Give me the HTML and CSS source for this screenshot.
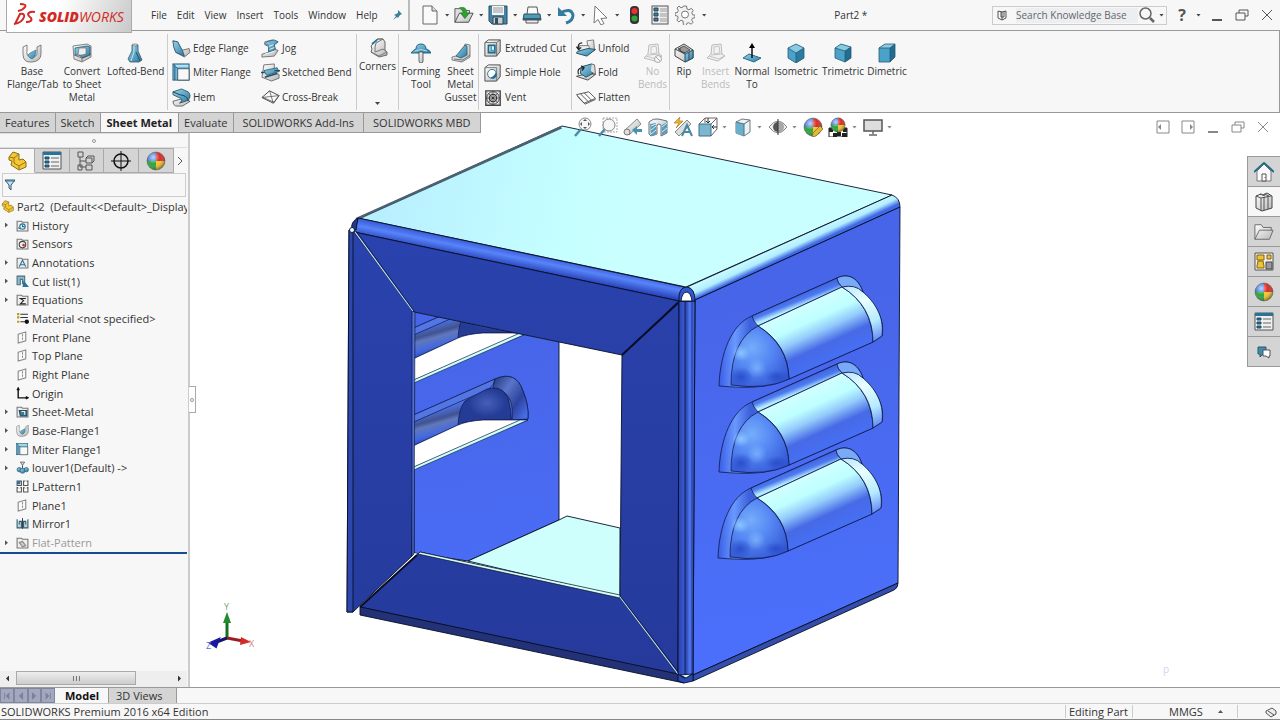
FILE: index.html
```html
<!DOCTYPE html>
<html lang="en">
<head>
<meta charset="utf-8">
<meta name="viewport" content="width=device-width, initial-scale=1">
<title>SOLIDWORKS - Part2</title>
<link rel="stylesheet" href="styles.css">
</head>
<body>
<svg class="defs" aria-hidden="true">
  <defs>
    <linearGradient id="blue" x1="0" y1="0" x2="1" y2="1"><stop offset="0" stop-color="#9bd6ea"/><stop offset="1" stop-color="#2878a2"/></linearGradient>
    <linearGradient id="steel" x1="0" y1="0" x2="1" y2="1"><stop offset="0" stop-color="#fff"/><stop offset="1" stop-color="#b8b8b8"/></linearGradient>
    <radialGradient id="shine" cx=".35" cy=".3" r=".75"><stop offset="0" stop-color="#fff" stop-opacity=".7"/><stop offset=".5" stop-color="#fff" stop-opacity="0"/><stop offset="1" stop-color="#000" stop-opacity=".5"/></radialGradient>
    <g id="ball"><path d="M10 1A9 9 0 0 0 1 10H10Z" fill="#3972d8"/><path d="M10 1A9 9 0 0 1 19 10H10Z" fill="#d82b24"/><path d="M1 10A9 9 0 0 0 10 19V10Z" fill="#2da33a"/><path d="M19 10A9 9 0 0 1 10 19V10Z" fill="#f0c52b"/><circle cx="10" cy="10" r="9" fill="url(#shine)" stroke="#555" stroke-width=".5"/></g>
  </defs>
  <symbol id="base" viewBox="0 0 20 20"><path d="M1 4l4-2v8q0 4 5 4t5-4V4l4-2v9q0 7-9 8T1 11Z" fill="url(#steel)" stroke="#666" stroke-width=".8"/><path d="M5 9l5 4 5-4-4-3Z" fill="#fff"/><path d="M8 10l6-3q0 7-4 9-3-1-4-4Z" fill="url(#blue)" stroke="#246c8c" stroke-width=".6"/></symbol>
  <symbol id="convert" viewBox="0 0 20 20"><path d="M1 3l14-2 4 2v11l-9 5-8-3Z" fill="url(#steel)" stroke="#666" stroke-width=".8"/><path d="M3 5l12-2 3 1v8l-7 3-4-3H3Z" fill="url(#blue)" stroke="#285c76" stroke-width=".8"/><path d="M7 5h7v6l-4 1H6Z" fill="#eee" stroke="#666" stroke-width=".6"/><path d="M2 12l8 3v3M10 15l9-4" fill="none" stroke="#555" stroke-width=".8"/></symbol>
  <symbol id="loft" viewBox="0 0 20 20"><path d="M7 2h6v6l4 9-3 2H5l-2-3 4-8Z" fill="url(#blue)" stroke="#3b5263" stroke-width=".8"/><ellipse cx="10" cy="2" rx="3" ry="1" fill="#e8f6fb" stroke="#444" stroke-width=".6"/><path d="M9 3v6l-3 9" fill="none" stroke="#b9e2ef"/><path d="M11 9l4 9" stroke="#244e6b"/></symbol>
  <symbol id="edge" viewBox="0 0 20 20"><path d="M1 2l5 1 4 9 8-2 1 4-6 5-9-5Z" fill="url(#steel)" stroke="#555" stroke-width=".8"/><path d="M1 2l5 1 5 9 2 6-9-4Q1 9 1 2Z" fill="url(#blue)" stroke="#244e64" stroke-width=".8"/></symbol>
  <symbol id="miter" viewBox="0 0 20 20"><rect x="1" y="1" width="17" height="17" fill="#71b9da" stroke="#345e71"/><path d="M6 6h12v12H6Z" fill="#f8f8f8" stroke="#465865"/><path d="M1 1l5 5M3 3v15" stroke="#285d7c"/><path d="M4 3h13" stroke="#b8e4f5" stroke-width="2"/></symbol>
  <symbol id="hem" viewBox="0 0 20 20"><path d="M1 14l11-3 7 3-8 5H4Q1 18 1 14Z" fill="url(#steel)" stroke="#444" stroke-width=".8"/><path d="M1 4l9-3 7 3q4 4 0 9l-9 3q5-5-1-6L1 7Z" fill="url(#blue)" stroke="#293f4a" stroke-width=".8"/><path d="M1 4l7 3q8 1 9 6" fill="none" stroke="#14445c"/></symbol>
  <symbol id="jog" viewBox="0 0 20 20"><path d="M4 3l8-2 6 2-4 3 1 5 3 1-4 6-13 1v-3l7-2V8L4 6Z" fill="url(#steel)" stroke="#555" stroke-width=".8"/><path d="M6 3l8-2 4 2-4 3 1 5-7 3V7L4 5Z" fill="url(#blue)" stroke="#305d75" stroke-width=".8"/><path d="M8 8l5-2M9 11l5-2M4 16l10-3" stroke="#e8f6fd"/></symbol>
  <symbol id="sketch" viewBox="0 0 20 20"><path d="M3 2l11-1v9l5 2v4l-8 3-10-4Z" fill="url(#steel)" stroke="#555" stroke-width=".8"/><path d="M3 8l14-3 2 4-13 4Z" fill="url(#blue)" stroke="#244e64" stroke-width=".8"/><path d="M0 10h4M14 8h6M4 15l13-4" stroke="#244e64" stroke-width="1.500"/></symbol>
  <symbol id="cross" viewBox="0 0 20 20"><path d="M1 10l8-7 10 5-6 8Z" fill="#fafafa" stroke="#444"/><path d="M1 10h1l12 5 5-7M1 10l18-2M9 3l4 13" fill="none" stroke="#555" stroke-width=".8"/></symbol>
  <symbol id="corner" viewBox="0 0 20 20"><path d="M3 8l6-7h6l2 3v8l2 2v3l-8 2-8-5 1-3Z" fill="url(#steel)" stroke="#666"/><path d="M3 8l7-7h5L8 5l-1 4v5l8-3 4 3-8 4-8-4" fill="none" stroke="#777"/><path d="M4 6l5-4" stroke="#237d9d" stroke-width="2"/></symbol>
  <symbol id="form" viewBox="0 0 20 20"><path d="M0 10Q2 7 5 6q0-5 5-5t5 5q4 1 5 4H0Z" fill="url(#blue)" stroke="#286482"/><path d="M4 8q6-3 12 0" fill="none" stroke="#b0dced"/><path d="M8 9h4v9q0 2-2 2t-2-2Z" fill="url(#steel)" stroke="#444" stroke-width=".8"/></symbol>
  <symbol id="gusset" viewBox="0 0 20 20"><path d="M14 1l5 1v12l-8 5-10-2v-3l12-3Z" fill="url(#steel)" stroke="#666" stroke-width=".8"/><path d="M14 2l2 1v9l-6 3-5-2Z" fill="url(#blue)" stroke="#28596e" stroke-width=".8"/><path d="M3 16l9 1 7-5" fill="none" stroke="#777"/></symbol>
  <symbol id="cut" viewBox="0 0 20 20"><path d="M1 4l4-3h13v13l-4 5H1Z" fill="url(#steel)" stroke="#444"/><path d="M1 4h13v15M14 4l4-3" fill="none" stroke="#666"/><path d="M5 7h7v8H5Z" fill="#fff" stroke="#236988" stroke-width="2"/><path d="M8 8v5h4" fill="none" stroke="#469dc1" stroke-width="2"/></symbol>
  <symbol id="hole" viewBox="0 0 20 20"><path d="M1 4l4-3h13v13l-4 5H1Z" fill="url(#steel)" stroke="#444"/><path d="M1 4h13v15" fill="none" stroke="#777"/><circle cx="9" cy="11" r="5" fill="#fff" stroke="#246d93"/><path d="M13 8q0 5-6 7 5 3 7-2Z" fill="#1d6d98"/></symbol>
  <symbol id="vent" viewBox="0 0 20 20"><path d="M2 2h16v16H2Z" fill="#eee" stroke="#444" stroke-width="1.500"/><circle cx="10" cy="10" r="7" fill="#ddd" stroke="#333"/><circle cx="10" cy="10" r="4" fill="none" stroke="#333" stroke-width="1.500"/><path d="M4 4l12 12M16 4L4 16M10 2v16M2 10h16" stroke="#444" stroke-width=".7"/><circle cx="10" cy="10" r="1.500" fill="#333"/></symbol>
  <symbol id="unfold" viewBox="0 0 22 20"><path d="M12 2l7-1 1 11-6 2Z" fill="url(#steel)" stroke="#777"/><path d="M4 7h10l1 5-11 2Z" fill="#eee" stroke="#777"/><path d="M2 13l11-3 8 1-9 7-11-3Z" fill="url(#blue)" stroke="#234d60"/><path d="M7 4Q2 4 3 10M1 8l2 3 3-2" fill="none" stroke="#222" stroke-width="1.300"/></symbol>
  <symbol id="fold" viewBox="0 0 22 20"><path d="M1 14l12-3 8 1-8 6Z" fill="url(#steel)" stroke="#444"/><path d="M6 4l11-3 3 9-9 5-6-4Z" fill="url(#blue)" stroke="#234d60"/><path d="M17 1l3 1 1 10-5-3" fill="#ddd" stroke="#666"/><path d="M3 12Q1 5 8 5M6 3l3 2-2 3" fill="none" stroke="#222" stroke-width="1.300"/></symbol>
  <symbol id="flatten" viewBox="0 0 22 20"><path d="M1 7l13-3 7 7-12 5Z" fill="#fafafa" stroke="#555"/><path d="M5 6l8 8M9 5l8 8M2 9l8 8 11-5" fill="none" stroke="#555"/></symbol>
  <symbol id="bends" viewBox="0 0 20 20"><path d="M6 2l9-1 1 10 3 2-7 5-11-3 4-4Z" fill="#f2f2f2" stroke="#bbb"/><path d="M8 4l5-1 1 7-6 1ZM3 13l10 3 5-3M5 12l11-1" fill="none" stroke="#c4c4c4"/></symbol>
  <symbol id="nobends" viewBox="0 0 20 20"><use href="#bends" width="20" height="20"/><circle cx="15" cy="16" r="3.500" fill="#f7f7f7" stroke="#aaa"/><path d="M13 14l4 4" stroke="#aaa"/></symbol>
  <symbol id="rip" viewBox="0 0 20 20"><path d="M1 6l9-5 9 6v8l-8 4-10-6Z" fill="url(#steel)" stroke="#444"/><path d="M4 6l6-3 6 4-6 3Z" fill="#999" stroke="#555"/><path d="M11 11l8-4v8l-8 4Z" fill="url(#blue)" stroke="#1e536d"/><path d="M1 6l10 5M6 5v3l5 2M15 9v8" fill="none" stroke="#444"/></symbol>
  <symbol id="normal" viewBox="0 0 20 20"><path d="M1 15l6-4 12 4-7 4Z" fill="url(#blue)" stroke="#2c6c87"/><path d="M10 15V3" stroke="#111" stroke-width="1.500"/><path d="M10 0l3 5H7Z"/></symbol>
  <symbol id="iso" viewBox="0 0 20 20"><path d="M2 5l8-4 8 4v10l-8 5-8-5Z" fill="#4ba2c8"/><path d="M2 5l8-4 8 4-8 5Z" fill="#8acbe4"/><path d="M10 10l8-5v10l-8 5Z" fill="#2d7aa2"/><path d="M2 5l8-4 8 4v10l-8 5-8-5V5l8 5 8-5M10 10v10" fill="none" stroke="#285a72" stroke-width=".8"/></symbol>
  <symbol id="tri" viewBox="0 0 20 20"><path d="M2 5l6-4 10 3v11l-6 4-10-4Z" fill="#4ba2c8"/><path d="M2 5l6-4 10 3-6 4Z" fill="#8acbe4"/><path d="M12 8l6-4v11l-6 4Z" fill="#226c93"/><path d="M2 5l6-4 10 3v11l-6 4-10-4V5l10 3 6-4M12 8v11" fill="none" stroke="#285a72" stroke-width=".8"/></symbol>
  <symbol id="di" viewBox="0 0 20 20"><path d="M2 5l6-4h10v13l-5 5H2Z" fill="#4ba2c8"/><path d="M2 5l6-4h10l-5 4Z" fill="#8acbe4"/><path d="M13 5l5-4v13l-5 5Z" fill="#226c93"/><path d="M2 5l6-4h10v13l-5 5H2V5h11l5-4M13 5v14" fill="none" stroke="#285a72" stroke-width=".8"/></symbol>
  <symbol id="pin" viewBox="0 0 12 12"><path d="M7 1l4 4-2 1-2 3-1-1-4 3 3-4-2-1 4-2Z" fill="#3b7f9b"/></symbol>
  <symbol id="new" viewBox="0 0 20 20"><path d="M3 1h9l5 5v13H3Z" fill="#fafafa" stroke="#666"/><path d="M12 1v5h5" fill="#ddd" stroke="#666"/></symbol>
  <symbol id="open" viewBox="0 0 22 20"><path d="M1 18V3h6l2 2h8v4" fill="#ddd" stroke="#555"/><path d="M1 18L6 8h15l-5 10Z" fill="url(#steel)" stroke="#444"/><path d="M6 2q8-2 8 6h3l-5 6-5-6h3q0-4-4-6Z" fill="#2ba32e" stroke="#247527" stroke-width=".6"/></symbol>
  <symbol id="save" viewBox="0 0 20 20"><path d="M1 1h18v18H4l-3-3Z" fill="#4484a4" stroke="#274d5f"/><path d="M4 1h12v9H4Z" fill="#f5f5f5"/><path d="M5 3h10M5 5h10M5 7h10" stroke="#999"/><path d="M5 12h10v7H5Z" fill="#ccc" stroke="#28485a"/><path d="M7 13h3v6H7Z" fill="#334f5c"/></symbol>
  <symbol id="print" viewBox="0 0 20 20"><path d="M5 9l1-7h9l1 7" fill="#fafafa" stroke="#555"/><path d="M2 9h16l1 6H1Z" fill="#4e99b8" stroke="#32505e"/><path d="M4 15h12v3H4Z" fill="#eee" stroke="#555"/><path d="M1 14h18" stroke="#345a6b" stroke-width="2"/></symbol>
  <symbol id="undo" viewBox="0 0 20 20"><path d="M4 8q11-6 13 2 0 6-7 8" fill="none" stroke="#347c9e" stroke-width="3"/><path d="M2 2v9h9Z" fill="#347c9e"/></symbol>
  <symbol id="cursor" viewBox="0 0 20 20"><path d="M5 1l12 12-6 .5 3 5-3 1.500-3-5.500L4 18Z" fill="#fff" stroke="#777"/></symbol>
  <symbol id="light" viewBox="0 0 20 20"><rect x="5" y="1" width="9" height="18" rx="4" fill="#333"/><circle cx="9.500" cy="6" r="3" fill="#ee302e"/><circle cx="9.500" cy="13.500" r="3" fill="#35a13a"/></symbol>
  <symbol id="options" viewBox="0 0 20 20"><rect x="2" y="1" width="16" height="18" fill="#eee" stroke="#555"/><path d="M4 3h4v3H4zM4 8h4v3H4zM4 13h4v3H4z" fill="#3b7d9b" stroke="#26495a"/><path d="M10 4h7M10 6h7M10 9h7M10 11h7M10 14h7M10 16h7" stroke="#999"/></symbol>
  <symbol id="gear" viewBox="0 0 20 20"><path d="M8.500 1h3l.5 3 2 .8 2.300-1.500 2 2-1.500 2.500.8 2 2.400.4v2.500l-2.500.5-.8 2 1.500 2-2 2-2.500-1.500-2 .8-.5 2H8.500L8 16l-2-.8L3.800 17l-2-2 1.400-2-.8-2L0 10.500V8l2.500-.5.8-2L2 3l2-2 2 1.800L8 2Z" fill="#f2f2f2" stroke="#777"/><circle cx="10" cy="9.500" r="3.500" fill="#fff" stroke="#777"/></symbol>
  <symbol id="min" viewBox="0 0 14 14"><path d="M2 12h10" stroke="currentColor" stroke-width="2"/></symbol>
  <symbol id="restore" viewBox="0 0 14 14"><path d="M4 5V2h9v6h-3M1 5h9v7H1Z" fill="none" stroke="currentColor"/></symbol>
  <symbol id="close" viewBox="0 0 14 14"><path d="M2 2l10 10M12 2L2 12" stroke="currentColor"/></symbol>
  <symbol id="dockl" viewBox="0 0 14 14"><path d="M1 1h12v12H1Z" fill="#fff" stroke="currentColor"/><path d="M5 4L2 7l3 3Z" fill="currentColor"/></symbol>
  <symbol id="dockr" viewBox="0 0 14 14"><path d="M1 1h12v12H1Z" fill="#fff" stroke="currentColor"/><path d="M9 4l3 3-3 3Z" fill="currentColor"/></symbol>
  <symbol id="book" viewBox="0 0 10 12"><path d="M1 2l4 1 4-1v7l-4 2-4-2ZM5 3v8M4 2v6h3V2" fill="none" stroke="#555"/></symbol>
  <symbol id="search" viewBox="0 0 18 18"><circle cx="7.500" cy="7.500" r="5.500" fill="none" stroke="#666" stroke-width="1.500"/><path d="M12 12l4 4" stroke="#666" stroke-width="2.500"/></symbol>
  <symbol id="part" viewBox="0 0 20 20"><path d="M2 6l4-5 6 2v6l4-1 3 3v5l-7 3-8-5 1-4-3-1Z" fill="#f2c834" stroke="#8d6b12"/><path d="M2 6l5 1 5-4M7 7v5l5 3 7-4M12 15v4" fill="none" stroke="#9a7617"/></symbol>
  <symbol id="props" viewBox="0 0 20 20"><path d="M1 1h18v17H1Z" fill="#f0f0f0" stroke="#555"/><path d="M1 1h18v3H1Z" fill="#287498"/><path d="M3 6h4v2H3zM3 10h4v2H3zM3 14h4v2H3z" fill="#287498" stroke="#194e67"/><path d="M9 7h8M9 11h8M9 15h8" stroke="#666"/></symbol>
  <symbol id="config" viewBox="0 0 20 20"><path d="M2 1h5v5H2ZM4 6v10h6M4 10h6M2 14h4v5H2ZM10 7h6v5h-6ZM10 14h6v5h-6ZM10 7l2-2h6v5l-2 2" fill="none" stroke="#555"/></symbol>
  <symbol id="target" viewBox="0 0 20 20"><circle cx="10" cy="10" r="7" fill="none" stroke="#111" stroke-width="1.500"/><path d="M10 0v20M0 10h20" stroke="#111"/></symbol>
  <symbol id="appearance" viewBox="0 0 20 20"><use href="#ball"/></symbol>
  <symbol id="filter" viewBox="0 0 12 12"><path d="M1 1h10L7 6v5L5 9V6Z" fill="#c9e2ee" stroke="#315569"/><path d="M1 2h10" stroke="#287498"/></symbol>
  <symbol id="folder" viewBox="0 0 12 12"><path d="M1 11V2h4l1 1h5v8Z" fill="#eee" stroke="#777"/></symbol>
  <symbol id="history" viewBox="0 0 12 12"><use href="#folder" width="12" height="12"/><circle cx="6" cy="7" r="2.500" fill="none" stroke="#287498"/><path d="M6 5v2h2M2 8l2 1" fill="none" stroke="#287498"/></symbol>
  <symbol id="sensor" viewBox="0 0 12 12"><use href="#folder" width="12" height="12"/><circle cx="6" cy="7" r="3" fill="none" stroke="#444"/><path d="M6 7l2 1" stroke="#d42f2f" stroke-width="2"/></symbol>
  <symbol id="annot" viewBox="0 0 12 12"><use href="#folder" width="12" height="12"/><path d="M3 10l3-6 3 6M4 8h4" fill="none" stroke="#287498"/></symbol>
  <symbol id="cutlist" viewBox="0 0 12 12"><path d="M1 1h7v7H6V4H4v5H1Z" fill="#93b8c8" stroke="#477186"/><path d="M7 5l5 6H6Z" fill="#287498"/></symbol>
  <symbol id="equation" viewBox="0 0 12 12"><use href="#folder" width="12" height="12"/><path d="M9 5H4l3 2-3 3h5" fill="none" stroke="#222"/></symbol>
  <symbol id="material" viewBox="0 0 12 12"><path d="M1 2h2M1 5h2M1 9h2" stroke="#b39920" stroke-width="2"/><path d="M4 2h7M4 5h7M4 9h5" stroke="#333"/><circle cx="10" cy="9" r="2" fill="#111"/></symbol>
  <symbol id="plane" viewBox="0 0 12 12"><path d="M2 3l7-2v8l-7 2Z" fill="#fafafa" stroke="#888"/><path d="M6 3v6" stroke="#888" stroke-dasharray="2 1"/></symbol>
  <symbol id="origin" viewBox="0 0 12 12"><path d="M2 1v9h9M1 3l1-2 1 2M9 9l2 1-2 1" fill="none" stroke="#111" stroke-width="1.300"/></symbol>
  <symbol id="metal" viewBox="0 0 12 12"><use href="#folder" width="12" height="12"/><path d="M3 5h7v5H4Z" fill="#397a96" stroke="#234d60"/><path d="M5 6h3v3" fill="none" stroke="#eee"/></symbol>
  <symbol id="louver" viewBox="0 0 12 12"><path d="M4 1h4L6 4Z" fill="#ddd" stroke="#555" stroke-width=".7"/><path d="M6 4v3" stroke="#285a72"/><circle cx="3" cy="8" r="2" fill="url(#blue)" stroke="#285a72" stroke-width=".7"/><circle cx="9.500" cy="8" r="2" fill="url(#blue)" stroke="#285a72" stroke-width=".7"/><circle cx="6" cy="9" r="2.300" fill="url(#blue)" stroke="#285a72" stroke-width=".7"/></symbol>
  <symbol id="pattern" viewBox="0 0 12 12"><path d="M1 1h4v4H1zM7 1h4v4H7zM1 7h4v4H1zM7 7h4v4H7z" fill="#fff" stroke="#555"/><path d="M1 1h3v3H1z" fill="#287498"/><path d="M8 1h2M2 7h2M8 7h2" stroke="#fff"/></symbol>
  <symbol id="mirror" viewBox="0 0 12 12"><path d="M1 2v8h4V4H3v3M11 2v8H7V4h2v3" fill="#b9d4e0" stroke="#365b6d"/><path d="M6 1v10" stroke="#222" stroke-width=".8"/></symbol>
  <symbol id="flatpat" viewBox="0 0 12 12"><use href="#folder" width="12" height="12"/><path d="M3 6l3-1 3 4-3 1Z" fill="#ccc" stroke="#888"/></symbol>
  <symbol id="fit" viewBox="0 0 20 20"><path d="M2 19l6-7" stroke="#4b8ba8" stroke-width="2.500"/><circle cx="12" cy="7" r="6" fill="#f5f5f5" fill-opacity=".8" stroke="#888"/><path d="M12 2l2 2h-4zM12 12l2-2h-4zM7 7l2-2v4zM17 7l-2-2v4z" fill="#555"/></symbol>
  <symbol id="area" viewBox="0 0 20 20"><path d="M5 1h14v14H5Z" fill="none" stroke="#aaa" stroke-dasharray="2 1"/><path d="M1 19l6-7" stroke="#4b8ba8" stroke-width="2.500"/><circle cx="11" cy="8" r="6" fill="#f5f5f5" fill-opacity=".85" stroke="#888"/></symbol>
  <symbol id="prev" viewBox="0 0 20 20"><path d="M1 14L14 2l4 5L6 18Z" fill="url(#steel)" stroke="#888"/><circle cx="4" cy="15" r="3" fill="#ddd" stroke="#777"/><path d="M9 13l5-4v3h5v3h-5v3Z" fill="#4b92b2"/></symbol>
  <symbol id="section" viewBox="0 0 20 20"><path d="M1 5q4-4 9-3t9 2v12l-6 3V8q-2-2-4 0v9l-6 2-2-2Z" fill="url(#steel)" stroke="#62737d"/><path d="M2 7l6-1v12l-5 1ZM14 8l5-3v10l-5 3Z" fill="#5b9bb9"/><path d="M3 9l5-2M3 13l5-4M3 17l5-4M14 10l5-4M14 15l5-4" stroke="#d8edf5"/></symbol>
  <symbol id="annview" viewBox="0 0 20 20"><path d="M2 15L14 3l4 4L6 19Z" fill="#ddd" stroke="#888"/><path d="M7 0L1 6h5L3 11l7-7H6Z" fill="#f3b52b" stroke="#a16c17" stroke-width=".6"/><path d="M9 19l5-11 5 11M11 15h6" fill="none" stroke="#4989a6" stroke-width="2"/></symbol>
  <symbol id="orient" viewBox="0 0 20 20"><path d="M1 7h12v12H1Z" fill="#7cb6cf" stroke="#39718a"/><path d="M1 7l6-6h12v11l-6 7M7 1v5M19 1l-6 6" fill="none" stroke="#666"/><path d="M10 1v5M8 4l2 2 2-2M19 10h-5M16 8l-2 2 2 2" fill="none" stroke="#333"/></symbol>
  <symbol id="display" viewBox="0 0 20 20"><path d="M3 5l6-3 8 1v12l-6 4-8-3Z" fill="#e9f3f7" stroke="#777"/><path d="M3 5l8 2v12l-8-3Z" fill="#6ab0cd"/><path d="M3 5l8 2 6-4M11 7v12" fill="none" stroke="#526e7b"/></symbol>
  <symbol id="eye" viewBox="0 0 20 20"><path d="M1 10q9-12 18 0-9 12-18 0Z" fill="#eee" stroke="#888"/><circle cx="10" cy="10" r="5" fill="#555"/><path d="M10 4a6 6 0 0 1 0 12Z" fill="#a7a7a7"/><path d="M10 2v16" stroke="#333"/></symbol>
  <symbol id="paint" viewBox="0 0 20 20"><use href="#ball"/><path d="M17 9l3 3-7 7-4 1 1-4Z" fill="#e8b82d" stroke="#666655" stroke-width=".7"/></symbol>
  <symbol id="scene" viewBox="0 0 20 20"><path d="M1 11h18v9H1Z" fill="#fff" stroke="#222"/><path d="M1 11h4v4H1zM9 15h4v4H9zM15 11h4v4h-4zM5 16h4v4H5zM14 16h5v4h-5z" fill="#222"/><g transform="translate(2 0) scale(.8)"><use href="#ball"/></g></symbol>
  <symbol id="monitor" viewBox="0 0 20 20"><path d="M1 3h18v11H1Z" fill="#ddd" stroke="#555" stroke-width="1.500"/><path d="M10 14v3M6 18h8" stroke="#666" stroke-width="1.500"/></symbol>
  <symbol id="home" viewBox="0 0 20 20"><path d="M3 9l7-7 7 7v10H3Z" fill="#fafafa" stroke="#777"/><path d="M0 10L10 1l10 9" fill="none" stroke="#286b88" stroke-width="2"/><path d="M8 12h4v7H8Z" fill="#fff" stroke="#555"/><path d="M11 15v1" stroke="#c33"/></symbol>
  <symbol id="library" viewBox="0 0 20 20"><path d="M2 4l5-2 2 1 4-2 5 3v12l-10 3-6-3Z" fill="url(#steel)" stroke="#444"/><path d="M2 4l5 2 10-2M7 6v13M10 5v13M14 4v13M6 2l5 2M10 2l5 2" fill="none" stroke="#555"/></symbol>
  <symbol id="explorer" viewBox="0 0 22 20"><path d="M1 18V2h7l2 3h9v3M1 18L6 8h15l-4 10Z" fill="url(#steel)" stroke="#666"/></symbol>
  <symbol id="palette" viewBox="0 0 20 20"><path d="M1 1h18v17H1Z" fill="#eee" stroke="#555"/><path d="M3 3h7v5H3zM13 3h4v4h-4zM3 14l1-5h5l1 5v2H3Z" fill="#efc331" stroke="#806515"/><path d="M12 10h6v7h-6Z" fill="#999" stroke="#444"/></symbol>
  <symbol id="forum" viewBox="0 0 20 20"><path d="M4 5h8v7H9l-3 3v-3H4Z" fill="#3b8dad" stroke="#32596a"/><path d="M9 8h7v6h-1v2l-3-2H9Z" fill="#fff" stroke="#555"/></symbol>
</svg>
<div class="app">
  <header class="title-bar">
    <a class="logo" href="#" aria-label="SOLIDWORKS">
      <svg class="logo-mark" viewBox="0 0 24 24" fill="none" stroke="#d12a24" stroke-width="2"><path d="M8 1q7 0 5 3-2 3-7 4"/><path d="M2 21q8-1 10-7 1-4-4-3L3 21Z"/><path d="M23 9q-6-1-7 2 0 2 3 4 2 4-5 4"/></svg>
      <span class="word"><b>SOLID</b>WORKS</span>
    </a>
    <nav class="menu">
      <button>File</button><button>Edit</button><button>View</button><button>Insert</button><button>Tools</button><button>Window</button><button>Help</button>
    </nav>
    <button class="pin" aria-label="Pin menu"><svg><use href="#pin"/></svg></button>
    <div class="quick">
      <button aria-label="New"><svg><use href="#new"/></svg></button><i class="arrow"></i>
      <button aria-label="Open"><svg><use href="#open"/></svg></button><i class="arrow"></i>
      <button aria-label="Save"><svg><use href="#save"/></svg></button><i class="arrow"></i>
      <button aria-label="Print"><svg><use href="#print"/></svg></button><i class="arrow"></i>
      <button aria-label="Undo"><svg><use href="#undo"/></svg></button><i class="arrow"></i>
      <button aria-label="Select"><svg><use href="#cursor"/></svg></button><i class="arrow"></i>
      <button class="wide" aria-label="Rebuild"><svg><use href="#light"/></svg></button>
      <button class="wide" aria-label="File properties"><svg><use href="#options"/></svg></button>
      <button class="wide" aria-label="Options"><svg><use href="#gear"/></svg></button><i class="arrow"></i>
    </div>
    <div class="doc-title">Part2 *</div>
    <form class="search">
      <svg class="book"><use href="#book"/></svg>
      <input type="text" placeholder="Search Knowledge Base" aria-label="Search Knowledge Base">
      <button type="button" aria-label="Search"><svg><use href="#search"/></svg></button><i class="arrow"></i>
    </form>
    <div class="window-controls">
      <button class="help" aria-label="Help">?</button><i class="arrow"></i>
      <button aria-label="Minimize"><svg><use href="#min"/></svg></button>
      <button aria-label="Restore"><svg><use href="#restore"/></svg></button>
      <button aria-label="Close"><svg><use href="#close"/></svg></button>
    </div>
  </header>

  <section class="ribbon" aria-label="Sheet Metal commands">
    <div class="group first">
      <button class="big w50"><svg><use href="#base"/></svg>Base<br>Flange/Tab</button>
      <button class="big w50"><svg><use href="#convert"/></svg>Convert<br>to Sheet<br>Metal</button>
      <button class="big w56"><svg><use href="#loft"/></svg>Lofted-Bend</button>
    </div>
    <div class="group lists">
      <div class="stack">
        <button class="small"><svg><use href="#edge"/></svg>Edge Flange</button>
        <button class="small"><svg><use href="#miter"/></svg>Miter Flange</button>
        <button class="small"><svg><use href="#hem"/></svg>Hem</button>
      </div>
      <div class="stack">
        <button class="small"><svg><use href="#jog"/></svg>Jog</button>
        <button class="small"><svg><use href="#sketch"/></svg>Sketched Bend</button>
        <button class="small"><svg><use href="#cross"/></svg>Cross-Break</button>
      </div>
    </div>
    <div class="group"><button class="big corners"><svg><use href="#corner"/></svg>Corners<i class="arrow"></i></button></div>
    <div class="group">
      <button class="big w44"><svg><use href="#form"/></svg>Forming<br>Tool</button>
      <button class="big w35"><svg><use href="#gusset"/></svg>Sheet<br>Metal<br>Gusset</button>
    </div>
    <div class="group holes">
      <div class="stack">
        <button class="small"><svg><use href="#cut"/></svg>Extruded Cut</button>
        <button class="small"><svg><use href="#hole"/></svg>Simple Hole</button>
        <button class="small"><svg><use href="#vent"/></svg>Vent</button>
      </div>
    </div>
    <div class="group folds">
      <div class="stack">
        <button class="small"><svg><use href="#unfold"/></svg>Unfold</button>
        <button class="small"><svg><use href="#fold"/></svg>Fold</button>
        <button class="small"><svg><use href="#flatten"/></svg>Flatten</button>
      </div>
      <button class="big w35" disabled><svg><use href="#nobends"/></svg>No<br>Bends</button>
    </div>
    <div class="group last">
      <button class="big w28"><svg><use href="#rip"/></svg>Rip</button>
      <button class="big w35" disabled><svg><use href="#bends"/></svg>Insert<br>Bends</button>
      <button class="big w38"><svg><use href="#normal"/></svg>Normal<br>To</button>
      <button class="big w50"><svg><use href="#iso"/></svg>Isometric</button>
      <button class="big w44"><svg><use href="#tri"/></svg>Trimetric</button>
      <button class="big w44"><svg><use href="#di"/></svg>Dimetric</button>
    </div>
  </section>

  <main class="work">
    <nav class="tabs">
      <button>Features</button><button>Sketch</button><button class="active">Sheet Metal</button><button>Evaluate</button><button class="roomy">SOLIDWORKS Add-Ins</button><button class="roomy">SOLIDWORKS MBD</button>
    </nav>

    <aside class="panel">
      <div class="grip"><span></span></div>
      <div class="panel-tabs">
        <button class="active" aria-label="Feature tree"><svg><use href="#part"/></svg></button>
        <button aria-label="Properties"><svg><use href="#props"/></svg></button>
        <button aria-label="Configurations"><svg><use href="#config"/></svg></button>
        <button aria-label="Dimensions"><svg><use href="#target"/></svg></button>
        <button aria-label="Display"><svg><use href="#appearance"/></svg></button>
        <button class="more" aria-label="More tabs"><svg viewBox="0 0 6 10"><path d="M1 1l4 4-4 4" fill="none" stroke="#555"/></svg></button>
      </div>
      <label class="filter"><svg><use href="#filter"/></svg><input type="text" aria-label="Filter tree"></label>
      <ul class="tree">
        <li class="root"><svg><use href="#part"/></svg>Part2&nbsp; (Default&lt;&lt;Default&gt;_Display</li>
        <li class="node"><svg><use href="#history"/></svg>History</li>
        <li><svg><use href="#sensor"/></svg>Sensors</li>
        <li class="node"><svg><use href="#annot"/></svg>Annotations</li>
        <li class="node"><svg><use href="#cutlist"/></svg>Cut list(1)</li>
        <li class="node"><svg><use href="#equation"/></svg>Equations</li>
        <li><svg><use href="#material"/></svg>Material &lt;not specified&gt;</li>
        <li><svg><use href="#plane"/></svg>Front Plane</li>
        <li><svg><use href="#plane"/></svg>Top Plane</li>
        <li><svg><use href="#plane"/></svg>Right Plane</li>
        <li><svg><use href="#origin"/></svg>Origin</li>
        <li class="node"><svg><use href="#metal"/></svg>Sheet-Metal</li>
        <li class="node"><svg><use href="#base"/></svg>Base-Flange1</li>
        <li class="node"><svg><use href="#miter"/></svg>Miter Flange1</li>
        <li class="node"><svg><use href="#louver"/></svg>louver1(Default) -&gt;</li>
        <li><svg><use href="#pattern"/></svg>LPattern1</li>
        <li><svg><use href="#plane"/></svg>Plane1</li>
        <li><svg><use href="#mirror"/></svg>Mirror1</li>
        <li class="node muted"><svg><use href="#flatpat"/></svg>Flat-Pattern</li>
      </ul>
      <div class="scroll">
        <button class="left" aria-label="Scroll left"></button>
        <div class="track"><div class="thumb"><span></span></div></div>
        <button class="right" aria-label="Scroll right"></button>
      </div>
      <button class="collapse" aria-label="Collapse panel"><span></span></button>
    </aside>

    <section class="viewport">
      <svg class="model" viewBox="190 113 1090 574" role="img" aria-label="Sheet metal part">
        <defs>
          <linearGradient id="topFace" gradientUnits="userSpaceOnUse" x1="380" y1="190" x2="620" y2="230"><stop offset="0" stop-color="#b7efff"/><stop offset=".8" stop-color="#c6ffff"/><stop offset="1" stop-color="#c9ffff"/></linearGradient>
          <linearGradient id="frontBend" gradientUnits="userSpaceOnUse" x1="520" y1="252" x2="517" y2="267"><stop offset="0" stop-color="#3c60db"/><stop offset=".4" stop-color="#5884fa"/><stop offset="1" stop-color="#2b46bc"/></linearGradient>
          <linearGradient id="sideBend" gradientUnits="userSpaceOnUse" x1="790" y1="241" x2="797" y2="256"><stop offset="0" stop-color="#c4faff"/><stop offset=".4" stop-color="#b3edff"/><stop offset=".75" stop-color="#3d68e4"/><stop offset="1" stop-color="#486af0"/></linearGradient>
          <linearGradient id="side" gradientUnits="userSpaceOnUse" x1="760" y1="300" x2="800" y2="620"><stop offset="0" stop-color="#4765e8"/><stop offset="1" stop-color="#4b6ffa"/></linearGradient>
          <linearGradient id="front" gradientUnits="userSpaceOnUse" x1="500" y1="240" x2="500" y2="670"><stop offset="0" stop-color="#2a42ad"/><stop offset="1" stop-color="#253a9b"/></linearGradient>
          <linearGradient id="post" gradientUnits="userSpaceOnUse" x1="679" y1="0" x2="695" y2="0"><stop offset="0" stop-color="#2a45b4"/><stop offset=".28" stop-color="#3856cc"/><stop offset=".42" stop-color="#263f9f"/><stop offset=".65" stop-color="#4d75f2"/><stop offset=".8" stop-color="#4468e8"/><stop offset="1" stop-color="#3858cd"/></linearGradient>
          <linearGradient id="barrel" gradientUnits="userSpaceOnUse" x1="801" y1="305" x2="827" y2="362"><stop offset="0" stop-color="#d2ffff"/><stop offset=".3" stop-color="#beffff"/><stop offset=".5" stop-color="#94cbfb"/><stop offset=".73" stop-color="#476ae6"/><stop offset="1" stop-color="#456ff4"/></linearGradient>
          <linearGradient id="fillet" gradientUnits="userSpaceOnUse" x1="793" y1="296" x2="799" y2="311"><stop offset="0" stop-color="#3e62df"/><stop offset=".4" stop-color="#4d7af0"/><stop offset=".75" stop-color="#b9efff"/><stop offset="1" stop-color="#95caf9"/></linearGradient>
          <linearGradient id="endcap" gradientUnits="userSpaceOnUse" x1="850" y1="280" x2="877" y2="342"><stop offset="0" stop-color="#b3e2ff"/><stop offset=".35" stop-color="#e8ffff"/><stop offset=".7" stop-color="#b5eaff"/><stop offset="1" stop-color="#5c82f3"/></linearGradient>
          <radialGradient id="dome" gradientUnits="userSpaceOnUse" cx="752" cy="348" r="44"><stop offset="0" stop-color="#75adfb"/><stop offset=".45" stop-color="#5688f4"/><stop offset="1" stop-color="#3458d5"/></radialGradient>
          <radialGradient id="spot"><stop offset="0" stop-color="#294fcb"/><stop offset="1" stop-color="#294fcb" stop-opacity="0"/></radialGradient>
          <radialGradient id="glow"><stop offset="0" stop-color="#8cc6ff"/><stop offset="1" stop-color="#8cc6ff" stop-opacity="0"/></radialGradient>
          <radialGradient id="haze"><stop offset="0" stop-color="#4560b8"/><stop offset="1" stop-color="#4560b8" stop-opacity="0"/></radialGradient>
          <linearGradient id="rimGradient" gradientUnits="userSpaceOnUse" x1="720" y1="0" x2="750" y2="0"><stop offset="0" stop-color="#3d61e8"/><stop offset=".5" stop-color="#6999ff"/><stop offset="1" stop-color="#3d60dc"/></linearGradient>
          <linearGradient id="tube" gradientUnits="userSpaceOnUse" x1="432" y1="410" x2="440" y2="438"><stop offset="0" stop-color="#5074ed"/><stop offset=".35" stop-color="#40538f"/><stop offset=".5" stop-color="#6078bc"/><stop offset=".8" stop-color="#4569de"/><stop offset="1" stop-color="#2e4fc5"/></linearGradient>
          <linearGradient id="hood" gradientUnits="userSpaceOnUse" x1="490" y1="385" x2="528" y2="411"><stop offset="0" stop-color="#273d86"/><stop offset=".35" stop-color="#5a75c9"/><stop offset=".7" stop-color="#2d449e"/><stop offset="1" stop-color="#476be4"/></linearGradient>
          <clipPath id="opening"><path d="M414 312L621 355L620 596L414 553Z"/></clipPath>
          <g id="louver-out" stroke="#101a4a" stroke-width=".8">
            <path d="M719 386C720 353 732 324 752 316L837 278C850 272 859 280 863 292C877 305 885 321 882 336L873 342L789 379C767 389 744 388 719 386Z" fill="url(#rimGradient)"/>
            <path d="M752 316L837 278Q837 282 842 287L758 326Q753 321 752 316Z" fill="url(#fillet)"/>
            <path d="M758 326L842 287Q872 305 873 342L789 379Q788 344 758 326Z" fill="url(#barrel)"/>
            <path d="M842 287Q855 283 863 292C878 305 884 320 882 336L873 342Q873 306 842 287Z" fill="url(#endcap)"/>
            <path d="M837 278C850 272 859 280 863 292Q855 284 842 287Q837 282 837 278Z" fill="#78aaf8"/>
            <path d="M758 326Q731 340 731 385Q767 390 789 379Q788 345 758 326Z" fill="url(#dome)"/>
            <ellipse cx="741" cy="377" rx="12" ry="10" fill="url(#spot)" stroke="none"/>
            <ellipse cx="777" cy="377" rx="12" ry="7" fill="url(#spot)" stroke="none"/>
            <ellipse cx="741" cy="353" rx="9" ry="8" fill="url(#glow)" stroke="none"/>
            <ellipse cx="757" cy="368" rx="10" ry="10" fill="url(#glow)" fill-opacity=".6" stroke="none"/>
          </g>
          <g id="louver-in" stroke="#101a4a" stroke-width=".7">
            <path d="M400 421L495 379Q516 370 523 391Q529 405 528 419L483 420Q467 421 458 425L400 452Z" fill="url(#tube)"/>
            <path d="M400 421L495 379Q494 385 489 389L400 428Z" fill="#5277e5"/>
            <path d="M495 379Q516 370 523 391Q529 405 528 419L512 420Q515 391 493 388Z" fill="url(#hood)"/>
            <path d="M465 401Q479 393 487 389Q511 382 511 420L483 420Q466 421 458 425Q459 408 465 401Z" fill="#253c96"/>
            <ellipse cx="487" cy="403" rx="19" ry="14" fill="url(#haze)" stroke="none"/>
            <path d="M400 452L458 425Q467 421 483 420H528L400 473Z" fill="#fff"/>
            <path d="M400 473L520 420H528L400 476Z" fill="#cffff9"/>
          </g>
        </defs>
        <g stroke="#080d27" stroke-width=".9" stroke-linejoin="round">
          <g clip-path="url(#opening)">
            <path d="M414 305H559V520L468 561L414 553Z" fill="url(#side)"/>
            <path d="M559 520L567 516L620 528V597L468 561Z" fill="#cffffc"/>
            <use href="#louver-in" y="-87"/>
            <use href="#louver-in"/>
          </g>
          <path d="M358 218L562 126L892 195L686 287Z" fill="url(#topFace)"/>
          <path d="M356 219L561 127" stroke="#4e6370" stroke-width="2"/>
          <path d="M359 219L562 128" stroke-width=".6"/>
          <path d="M358 218L684 287L679 301L354 232Z" fill="url(#frontBend)"/>
          <path d="M687 287L892 195Q900 198 900 207L695 300Z" fill="url(#sideBend)"/>
          <path d="M695 300L900 207L898 583L693 675Z" fill="url(#side)"/>
          <path d="M693 675L898 583Q898 588 894 590L693 681Z" fill="#334eab"/>
          <path d="M354 232L679 301L622 355L414 312Z" fill="url(#front)"/>
          <path d="M349 230L354 232L414 312L412 556L353 612H347Z" fill="url(#front)"/>
          <path d="M349 230L353 231V612H347Z" fill="#2e47ad"/>
          <path d="M412 311L415 312L414 554L412 556Z" fill="#5170da" stroke-width=".6"/>
          <path d="M679 301L622 355L620 597L678 675Z" fill="url(#front)"/>
          <path d="M360 607L420 552L619 596L678 675Z" fill="url(#front)"/>
          <path d="M360 607L678 674L684 683L360 615Z" fill="#233276"/>
          <path d="M360 607L417 555" stroke-width="2"/>
          <path d="M420 552L620 595V598L418 554Z" fill="#d5fff8" stroke-width=".7"/>
          <path d="M355 232L413 311M620 597L678 674" stroke="#c0e5e5" stroke-width="1.200"/>
          <path d="M356 231L414 311M621 597L679 673" stroke-width=".7"/>
          <path d="M678 303L622 355" stroke-width="2"/>
          <path d="M679 301H695L693 675L684 678L678 675Z" fill="url(#post)"/>
          <path d="M685 302V675M692 302V675" fill="none" stroke-width=".5"/>
          <path d="M678 674L684 678L693 674V681L684 683L678 681Z" fill="#2949b4"/>
          <path d="M680 675L686 678L692 674Z" fill="#e4ffff"/>
          <path d="M679 301Q678 287 687 287Q695 288 695 301Z" fill="#3157cd"/>
          <path d="M681 301Q682 292 687 292Q691 293 692 301Z" fill="#fff"/>
          <path d="M352 230Q350 222 358 218L356 230Z" fill="#22388c"/>
          <circle cx="352" cy="230" r="2.500" fill="#e6ffff"/>
          <use href="#louver-out"/>
          <use href="#louver-out" y="86"/>
          <use href="#louver-out" x="-1" y="172"/>
        </g>
        <g class="triad">
          <path d="M227 638V620" stroke="#176f24" stroke-width="3"/><path d="M223 623L227 612L231 623Z" fill="#228b2c"/>
          <path d="M227 638L243 641" stroke="#9c1d1d" stroke-width="3"/><path d="M241 637L251 642L240 645Z" fill="#d32a2a"/>
          <path d="M227 638L214 643" stroke="#15156b" stroke-width="3"/><path d="M219 639L210 643L216 647Z" fill="#1919a0" stroke="#1919a0" stroke-width="2"/>
          <text x="224" y="610" fill="#7c9b7c">Y</text><text x="249" y="647" fill="#e08080">X</text><text x="206" y="649" fill="#6868c8">Z</text>
        </g>
        <text class="faint" x="1163" y="673">p</text>
      </svg>

      <div class="view-tools">
        <button aria-label="Zoom to fit"><svg><use href="#fit"/></svg></button>
        <button aria-label="Zoom to area"><svg><use href="#area"/></svg></button>
        <button aria-label="Previous view"><svg><use href="#prev"/></svg></button>
        <button aria-label="Section view"><svg><use href="#section"/></svg></button>
        <button aria-label="Annotation view"><svg><use href="#annview"/></svg></button>
        <button aria-label="View orientation"><svg><use href="#orient"/></svg></button><i class="arrow"></i>
        <button aria-label="Display style"><svg><use href="#display"/></svg></button><i class="arrow"></i>
        <button aria-label="Hide or show"><svg><use href="#eye"/></svg></button><i class="arrow"></i>
        <button aria-label="Edit appearance"><svg><use href="#paint"/></svg></button>
        <button aria-label="Apply scene"><svg><use href="#scene"/></svg></button><i class="arrow"></i>
        <button aria-label="View settings"><svg><use href="#monitor"/></svg></button><i class="arrow"></i>
      </div>
      <div class="doc-controls">
        <button aria-label="Dock left"><svg><use href="#dockl"/></svg></button>
        <button aria-label="Dock right"><svg><use href="#dockr"/></svg></button>
        <button aria-label="Minimize document"><svg><use href="#min"/></svg></button>
        <button aria-label="Restore document"><svg><use href="#restore"/></svg></button>
        <button aria-label="Close document"><svg><use href="#close"/></svg></button>
      </div>
      <nav class="task-pane">
        <button aria-label="Resources"><svg><use href="#home"/></svg></button>
        <button class="active" aria-label="Design library"><svg><use href="#library"/></svg></button>
        <button aria-label="File explorer"><svg><use href="#explorer"/></svg></button>
        <button aria-label="View palette"><svg><use href="#palette"/></svg></button>
        <button aria-label="Appearances"><svg><use href="#appearance"/></svg></button>
        <button aria-label="Custom properties"><svg><use href="#props"/></svg></button>
        <button aria-label="Forum"><svg><use href="#forum"/></svg></button>
      </nav>
    </section>
  </main>

  <nav class="sheet-tabs">
    <div class="pager">
      <button aria-label="First"><svg viewBox="0 0 10 10"><path d="M2 1v8M8 1L4 5l4 4"/></svg></button>
      <button aria-label="Previous"><svg viewBox="0 0 10 10"><path d="M7 1L3 5l4 4Z"/></svg></button>
      <button aria-label="Next"><svg viewBox="0 0 10 10"><path d="M3 1l4 4-4 4Z"/></svg></button>
      <button aria-label="Last"><svg viewBox="0 0 10 10"><path d="M8 1v8M2 1l4 4-4 4"/></svg></button>
    </div>
    <button class="sheet active">Model</button>
    <button class="sheet">3D Views</button>
  </nav>
  <footer class="status">
    <span class="edition">SOLIDWORKS Premium 2016 x64 Edition</span>
    <span class="cell">Editing Part</span>
    <button class="units">MMGS <i class="up"></i></button>
    <button class="tag" aria-label="Tags"><svg viewBox="0 0 12 12"><path d="M1 5l6-3 4 3v3l-5 3-5-4Z" fill="#eee" stroke="#555"/><path d="M3 5l6 4" stroke="#555"/></svg></button>
  </footer>
</div>
</body>
</html>
```
FILE: styles.css
```css
* { box-sizing: border-box; }

body {
  margin: 0;
  background: #fff;
  color: #333;
  font: 10px/13px "Open Sans", "Noto Sans", sans-serif;
}

button, input {
  margin: 0;
  padding: 0;
  border: 0;
  background: none;
  color: inherit;
  font: inherit;
}

button svg { display: block; width: 20px; height: 20px; }
.defs { position: absolute; width: 0; height: 0; }

.app {
  display: flex;
  flex-direction: column;
  min-height: 100vh;
}

.arrow {
  flex: none;
  width: 5px;
  height: 3px;
  background: #444;
  clip-path: polygon(0 0, 100% 0, 50% 100%);
}

/* Title bar */
.title-bar {
  display: flex;
  align-items: center;
  height: 31px;
  border-bottom: 1px solid #999;
  background: #f7f7f7;
}

.logo {
  z-index: 2;
  display: flex;
  flex: none;
  align-items: center;
  align-self: flex-start;
  width: 126px;
  height: 33px;
  margin-left: 6px;
  padding: 0 0 3px 5px;
  border: 1px solid #aaa;
  border-top: 0;
  background: linear-gradient(110deg, #fff 40%, #c9c9c9);
  color: #d12a24;
  font: italic 14px/20px "Open Sans", sans-serif;
  text-decoration: none;
}

.logo-mark { flex: none; width: 24px; height: 24px; margin-right: 3px; }
.word { padding-top: 5px; }
.word b { font-weight: 800; }

.menu { display: flex; gap: 10px; margin-left: 19px; }

.pin { margin-left: 13px; }
.pin svg { width: 12px; height: 12px; }

.quick {
  display: flex;
  align-items: center;
  height: 30px;
  margin-left: 5px;
  padding-left: 9px;
  border-left: 2px solid #bbb;
}

.quick button { width: 22px; }
.quick button svg { width: 20px; height: 20px; margin: 0 auto; }
.quick .arrow { margin: 0 3px 0 4px; }
.quick .wide { width: 25px; }

.doc-title { flex: 1; text-align: center; }

.search {
  display: flex;
  align-items: center;
  width: 175px;
  height: 19px;
  border: 1px solid #ccc;
  background: #f7f7f7;
}

.book { width: 10px; height: 12px; margin: 0 9px 0 4px; }
.search input { width: 122px; height: 15px; background: #eceef2; }
.search input::placeholder { color: #666; opacity: 1; }
.search button svg { width: 18px; height: 18px; }
.search .arrow { margin-left: 3px; }

.window-controls { display: flex; align-items: center; margin: 0 1px 0 8px; color: #555; }
.window-controls button { width: 25px; }
.window-controls .help { width: 14px; font-weight: 700; font-size: 16px; line-height: 20px; }
.window-controls svg { width: 14px; height: 14px; margin: 0 auto; }
.window-controls .arrow { margin: 0 3px 0 7px; }

/* Command ribbon */
.ribbon {
  display: flex;
  height: 82px;
  padding: 3px 0 2px;
  border-right: 1px solid #999;
  border-bottom: 1px solid #999;
  background: #f7f7f7;
}

.group { display: flex; flex: none; border-right: 1px solid #ccc; }
.first { width: 168px; padding: 0 4px 0 7px; }
.lists { width: 189px; padding-left: 4px; gap: 2px; }
.holes { width: 93px; padding-left: 5px; }
.folds { width: 98px; padding-left: 3px; }
.last { border-right: 0; }

.big {
  flex: none;
  align-self: flex-start;
  padding-top: 9px;
  text-align: center;
  white-space: nowrap;
}

.big svg { margin: 0 auto 2px; }
.big:disabled { color: #bbb; }
.w28 { width: 28px; }
.w35 { width: 35px; }
.w38 { width: 38px; }
.w44 { width: 44px; }
.w50 { width: 50px; }
.w56 { width: 56px; }
.corners { width: 41px; padding-top: 4px; }
.corners .arrow { display: block; margin: 29px auto 0; }

.stack { display: grid; flex: none; grid-template-rows: repeat(3, 1fr); width: 87px; padding-top: 2px; }
.folds .stack { width: 60px; }
.small { display: flex; align-items: center; gap: 2px; white-space: nowrap; }
.small svg { flex: none; width: 19px; height: 19px; }
.holes .small { gap: 3px; }
.holes .small svg { width: 18px; height: 18px; }
.folds .small svg { width: 22px; }
.folds .small { gap: 1px; }

/* Work area */
.work {
  display: grid;
  flex: 1;
  grid-template-columns: 190px minmax(0, 1fr);
  grid-template-rows: 20px minmax(0, 1fr);
}

.tabs {
  z-index: 2;
  display: flex;
  grid-area: 1 / 1 / 2 / 3;
  justify-self: start;
  border-bottom: 1px solid #999;
  background: #f7f7f7;
  font-size: 11px;
}

.tabs button { padding: 0 5px 1px; border-right: 1px solid #999; background: #d4d4d4; white-space: nowrap; }
.tabs .active { padding: 0 6px 1px; background: #f7f7f7; color: #222; font-weight: 700; }
.tabs .roomy { padding: 0 9px 1px; }

.panel {
  position: relative;
  display: flex;
  flex-direction: column;
  grid-area: 2 / 1 / 3 / 2;
  min-width: 0;
  padding-right: 1px;
  border-right: 2px solid #ccc;
  background: #f7f7f7;
  font-size: 11px;
}

.grip { display: grid; place-items: center; height: 15px; border: 1px solid #ddd; border-width: 1px 0; }
.grip span, .collapse span { width: 4px; height: 4px; border: 1px solid #999; border-radius: 50%; }

.panel-tabs { display: flex; height: 25px; }
.panel-tabs button {
  display: grid;
  flex: 1;
  place-items: center;
  border: 1px solid #aaa;
  border-width: 1px 1px 1px 0;
  background: #d4d4d4;
}
.panel-tabs .active { border-bottom-color: #f7f7f7; background: #f7f7f7; }
.panel-tabs .more { flex: 0 0 13px; border: 0; background: none; }
.panel-tabs .more svg { width: 6px; height: 10px; }

.filter { display: flex; align-items: center; height: 24px; margin: 0 1px 0 2px; border: 1px solid #ccc; }
.filter svg { width: 12px; height: 12px; margin: 0 3px 0 1px; }
.filter input { flex: 1; min-width: 0; }

.tree {
  display: grid;
  grid-auto-rows: 1fr;
  height: 357px;
  margin: 0;
  padding: 0;
  border-bottom: 2px solid #174c93;
  list-style: none;
}

.tree li { display: flex; align-items: center; min-height: 0; padding-left: 16px; overflow: hidden; white-space: nowrap; }
.tree svg { flex: none; width: 13px; height: 13px; margin-right: 3px; }
.tree .root { padding-left: 1px; }
.tree .node { padding-left: 5px; }
.tree .node::before {
  width: 3px;
  height: 5px;
  margin-right: 8px;
  background: #555;
  clip-path: polygon(0 0, 100% 50%, 0 100%);
  content: "";
}
.tree .muted { color: #999; }

.scroll { display: flex; height: 16px; margin-top: auto; padding-bottom: 1px; background: #eee; }
.scroll button { width: 15px; display: grid; place-items: center; }
.scroll button::before { width: 3px; height: 6px; background: #333; content: ""; }
.scroll .left::before { clip-path: polygon(100% 0, 0 50%, 100% 100%); }
.scroll .right::before { clip-path: polygon(0 0, 100% 50%, 0 100%); }
.track { flex: 1; padding-left: 1px; }
.thumb { display: grid; place-items: center; width: 77%; height: 14px; border: 1px solid #aaa; background: linear-gradient(#eee, #ccc); }
.thumb span { width: 7px; height: 5px; background: repeating-linear-gradient(90deg, #777 0 1px, transparent 1px 3px); }

.collapse {
  position: absolute;
  z-index: 3;
  top: 253px;
  right: -8px;
  display: grid;
  place-items: center;
  width: 7px;
  height: 27px;
  border: 1px solid #aaa;
  border-left: 0;
  background: #fff;
}

/* Graphics area */
.viewport { position: relative; grid-area: 1 / 2 / 3 / 3; min-width: 0; overflow: hidden; background: #fff; }
.model { display: block; width: 100%; height: 100%; }
.triad text { font-size: 9px; }
.faint { fill: #d4d4f0; font-size: 10px; }

.view-tools {
  position: absolute;
  top: 4px;
  left: 50%;
  display: flex;
  align-items: center;
  padding-right: 5px;
  transform: translateX(-50%);
}
.view-tools button { width: 25px; }
.view-tools svg { margin: 0 auto; }
.view-tools .arrow { margin: 0 3px 0 2px; background: #888; }

.doc-controls { position: absolute; top: 7px; right: 5px; display: flex; color: #888; }
.doc-controls button { width: 25px; }
.doc-controls svg { width: 14px; height: 14px; margin: 0 auto; }

.task-pane { position: absolute; top: 43px; right: 0; width: 33px; border: 1px solid #999; border-width: 1px 0 0 1px; }
.task-pane button { display: grid; place-items: center; width: 100%; height: 30px; border-bottom: 1px solid #999; background: #d4d4d4; }
.task-pane .active { background: #f7f7f7; }

/* Bottom bars */
.sheet-tabs {
  display: flex;
  height: 17px;
  border-top: 1px solid #999;
  border-bottom: 1px solid #ccc;
  background: #f7f7f7;
  font-size: 11px;
}
.pager { display: flex; width: 55px; background: #8e95ae; }
.pager button { display: grid; flex: 1; place-items: center; border: 1px solid #7f86a3; background: #a3a8bd; }
.pager svg { width: 8px; height: 8px; fill: #7c839e; stroke: #757c97; }
.sheet { padding: 0 14px 0 7px; border-right: 1px solid #999; background: #d4d4d4; }
.sheet.active { padding: 0 9px 0 10px; background: #f7f7f7; color: #111; font-weight: 700; }

.status {
  display: flex;
  align-items: center;
  height: 16px;
  border-bottom: 1px solid #888;
  background: #f7f7f7;
  font-size: 11px;
  white-space: nowrap;
}
.edition { flex: 1; padding-left: 1px; }
.cell { padding: 0 4px 0 3px; border-left: 1px solid #ccc; }
.units {
  display: flex;
  align-items: center;
  justify-content: space-between;
  width: 106px;
  padding: 0 14px 0 36px;
  border: 1px solid #ccc;
  border-width: 0 1px;
}
.up { width: 5px; height: 3px; background: #555; clip-path: polygon(50% 0, 100% 100%, 0 100%); }
.tag { width: 42px; }
.tag svg { width: 12px; height: 12px; margin: 0 3px 0 auto; }
```
